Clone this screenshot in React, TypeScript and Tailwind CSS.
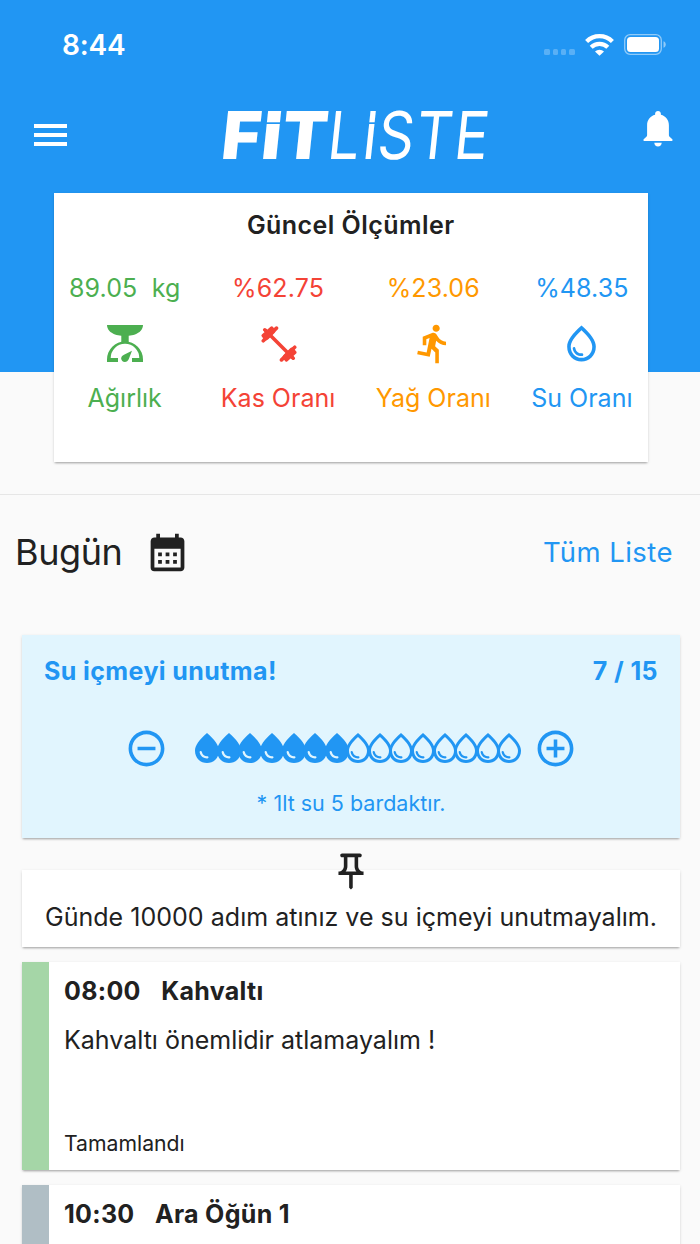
import type { ReactNode } from "react";
import {
  MdAddCircleOutline,
  MdCalendarMonth,
  MdDirectionsRun,
  MdOutlinePushPin,
  MdOutlineWaterDrop,
  MdRemoveCircleOutline,
  MdWaterDrop,
} from "react-icons/md";

const CARD_SHADOW =
  "shadow-[0_2px_2px_-1px_rgba(0,0,0,0.28),0_1px_3px_rgba(0,0,0,0.12)]";

function ScaleIcon() {
  return (
    <svg className="w-9 h-[37px]" viewBox="0 0 36 37" fill="currentColor">
      <path d="M0 0h36c0 4.400-3.400 7.800-8 9.400-2.200.8-4 1-6.300 1.300v7h-7.400v-7c-2.300-.3-4.100-.5-6.300-1.300C3.400 7.800 0 4.400 0 0z" />
      <path d="M0 37v-2.500a18 18 0 0 1 36 0V37H25v-3.900h7.300a14.300 14.300 0 0 0-28.600 0H11V37z" />
      <path d="M25 25.800l-3.200 8.200c-.8 2-2.200 3-4 3-2 0-3.600-1.600-3.600-3.500 0-1.700 1-2.900 2.800-3.800z" />
    </svg>
  );
}

function DumbbellIcon() {
  return (
    <svg className="size-9 translate-x-px translate-y-px" viewBox="0 0 36 36" fill="none" stroke="currentColor" strokeWidth="3.600" strokeLinecap="round">
      <path d="M5 5l26 26" strokeWidth="3.600" />
      <path d="M2.300 14.800L15.500 2.100M2.300 9.500l8.400-7.400M3.800 3.800L9 9" />
      <path d="M33.700 21.200L20.500 33.900M33.700 26.500l-8.400 7.400M32.200 32.200L27 27" />
      <path d="M5 11l6-6M31 25l-6 6" strokeWidth="6.500" />
    </svg>
  );
}

function BellIcon() {
  return (
    <svg className="w-[30px] h-9" viewBox="0 0 30 36" fill="white">
      <path d="M15 0c1.700 0 2.900 1.200 2.900 2.800v1C22.700 5 25.900 9 25.900 14.200v9.600c0 1.200.3 1.700 1 2.300l2.400 2.200c.5.500.4 1.700-.5 1.700H1.200c-.9 0-1-1.200-.5-1.700l2.400-2.200c.7-.6 1-1.100 1-2.300v-9.600C4.100 9 7.300 5 12.100 3.800v-1C12.100 1.200 13.300 0 15 0z" />
      <path d="M11.300 31.800h7.400c0 2.300-1.600 3.700-3.700 3.700s-3.700-1.400-3.700-3.700z" />
    </svg>
  );
}

function Logo() {
  return (
    <svg
      className="w-[290px] h-[84px]"
      viewBox="-7 -16 290 84"
      fill="white"
      fontFamily="Inter, sans-serif"
      fontSize="66"
    >
      <text transform="translate(4 50) skewX(-6)" fontWeight="900" x="1 41 61">
        FIT
      </text>
      <text
        transform="translate(111 50) skewX(-6) scale(.86 1)"
        fontWeight="400"
        x="0 40 58 102 147"
      >
        LISTE
      </text>
      <rect x="46" y="13.300" width="25" height="1.700" fill="#2196f3" />
      <rect x="147" y="13.300" width="17" height="1.700" fill="#2196f3" />
    </svg>
  );
}

function StatusBar() {
  return (
    <div className="flex items-center justify-between pl-[62px] pr-[34px] h-[90px]">
      <span className="text-[28px] font-semibold tracking-[-0.2px]">8:44</span>
      <div className="flex items-center">
        <div className="flex gap-[3px] mt-[14px] mr-[10px] opacity-25">
          {[0, 1, 2, 3].map((dot) => (
            <div key={dot} className="w-[5.300px] h-[5.300px] rounded-[1.500px] bg-white" />
          ))}
        </div>
        <svg className="w-[29px] h-[22px] mr-[10.500px] -mt-px" viewBox="0 0 29 22" fill="none" stroke="white">
          <path d="M1.600 7.500a18.300 18.300 0 0 1 25.800 0" strokeWidth="4.300" />
          <path d="M6.200 13.200a12 12 0 0 1 16.600 0" strokeWidth="4.300" />
          <path d="M14.500 21.800l-4.500-4.400a6.700 6.700 0 0 1 9 0z" fill="white" stroke="none" />
        </svg>
        <svg className="w-[42px] h-[21px] -mt-px" viewBox="0 0 42 21">
          <rect x=".7" y=".7" width="36.600" height="19.600" rx="5.500" fill="none" stroke="white" strokeOpacity=".5" strokeWidth="1.300" />
          <rect x="3" y="3" width="32" height="15" rx="3.500" fill="white" />
          <path d="M39.500 7.200c3 1.200 3 5.400 0 6.600z" fill="white" fillOpacity=".5" />
        </svg>
      </div>
    </div>
  );
}

interface MeasureProps {
  value: string;
  label: string;
  color: string;
  icon: ReactNode;
}

function Measure({ value, label, color, icon }: MeasureProps) {
  return (
    <div className={`flex flex-col items-center ${color}`}>
      <span className="h-8 leading-8 text-[25px] tracking-[0.1px] whitespace-pre">{value}</span>
      <div className="h-[78px] flex items-center justify-center">{icon}</div>
      <span className="h-8 leading-8 text-[25px]">{label}</span>
    </div>
  );
}

const measures: MeasureProps[] = [
  { value: "89.05  kg", label: "Ağırlık", color: "text-[#4caf50]", icon: <ScaleIcon /> },
  { value: "%62.75", label: "Kas Oranı", color: "text-[#f44336]", icon: <DumbbellIcon /> },
  { value: "%23.06", label: "Yağ Oranı", color: "text-[#ff9800]", icon: <MdDirectionsRun size={43} /> },
  { value: "%48.35", label: "Su Oranı", color: "text-[#2196f3]", icon: <MdOutlineWaterDrop size={43} /> },
];

function WaterCard() {
  const total = 15;
  const drunk = 7;

  return (
    <div className={`h-[203px] bg-[#e1f5fe] text-[#2196f3] ${CARD_SHADOW}`}>
      <div className="flex justify-between px-[22px] pt-5 leading-8 text-[25px] font-bold tracking-[0.4px]">
        <span>Su içmeyi unutma!</span>
        <span>{drunk} / {total}</span>
      </div>
      <div className="flex items-center justify-center mt-[39px] h-11">
        <MdRemoveCircleOutline size={43} />
        <div className="flex ml-[29px] mr-[14.500px]">
          {Array.from({ length: total }, (_, i) => (
            <div key={i} className="w-[21.570px] flex justify-center">
              {i < drunk ? (
                <MdWaterDrop size={36} className="shrink-0" />
              ) : (
                <MdOutlineWaterDrop size={36} className="shrink-0" />
              )}
            </div>
          ))}
        </div>
        <MdAddCircleOutline size={43} />
      </div>
      <p className="mt-[19px] text-center text-[21.500px] leading-7">
        * 1lt su 5 bardaktır.
      </p>
    </div>
  );
}

interface MealProps {
  time: string;
  title: string;
  description?: string;
  status?: string;
  bar: string;
}

const meals: MealProps[] = [
  {
    time: "08:00",
    title: "Kahvaltı",
    description: "Kahvaltı önemlidir atlamayalım !",
    status: "Tamamlandı",
    bar: "bg-[#a5d6a7]",
  },
  { time: "10:30", title: "Ara Öğün 1", bar: "bg-[#b0bec5]" },
];

function MealCard({ time, title, description, status, bar }: MealProps) {
  return (
    <div className={`flex h-[208px] mb-[15px] bg-white ${CARD_SHADOW}`}>
      <div className={`w-[27px] ${bar}`} />
      <div className="flex-1 flex flex-col pl-[15px] pt-[13px] pb-[13px]">
        <div className="flex gap-[20.500px] text-[25px] leading-8 font-bold tracking-[0.3px]">
          <span>{time}</span>
          <span>{title}</span>
        </div>
        <p className="mt-[17px] text-[25px] leading-8">{description}</p>
        <span className="mt-auto text-[21.200px] leading-7">{status}</span>
      </div>
    </div>
  );
}

export default function App() {
  return (
    <div className="w-[700px] h-[1244px] overflow-hidden bg-[#fafafa] text-[#212121] font-['Inter','Liberation_Sans',sans-serif]">
      <header className="h-[372px] bg-[#2196f3] text-white">
        <StatusBar />
        <div className="flex items-center justify-between h-[90px] pl-[34px] pr-[27px]">
          <div className="flex flex-col gap-[5px]">
            <div className="w-[33px] h-1 bg-white" />
            <div className="w-[33px] h-1 bg-white" />
            <div className="w-[33px] h-1 bg-white" />
          </div>
          <div className="mr-[5px]">
            <Logo />
          </div>
          <div className="mb-[13px]">
            <BellIcon />
          </div>
        </div>
        <section className={`ml-[54px] mr-[52.500px] mt-[13px] h-[269px] bg-white pt-4 text-[#212121] ${CARD_SHADOW}`}>
          <h2 className="text-center text-[25px] leading-8 font-semibold tracking-[0.450px]">Güncel Ölçümler</h2>
          <div className="flex justify-between mt-[31px] px-[15px]">
            {measures.map((measure) => (
              <Measure key={measure.label} {...measure} />
            ))}
          </div>
        </section>
      </header>

      <div className="h-[122px]" />
      <main className="border-t border-[#e6e6e6]">
        <div className="flex items-center justify-between h-[115px] mb-px pl-[15px] pr-[27px]">
          <div className="flex items-center gap-[23px]">
            <h1 className="mb-0.5 text-[36px] tracking-[-0.4px]">Bugün</h1>
            <MdCalendarMonth size={45} />
          </div>
          <a className="mt-px text-[27.500px] text-[#2196f3] tracking-[0.450px]">Tüm Liste</a>
        </div>

        <div className="pt-6 pl-[22px] pr-5">
          <WaterCard />
          <div className={`relative mt-8 mb-[15px] h-[77px] bg-white pt-[31px] text-center ${CARD_SHADOW}`}>
            <MdOutlinePushPin size={43} className="absolute left-1/2 -translate-x-1/2 -top-5" />
            <p className="text-[25px] leading-8 tracking-[0.030px]">
              Günde 10000 adım atınız ve su içmeyi unutmayalım.
            </p>
          </div>
          {meals.map((meal) => (
            <MealCard key={meal.time} {...meal} />
          ))}
        </div>
      </main>
    </div>
  );
}
